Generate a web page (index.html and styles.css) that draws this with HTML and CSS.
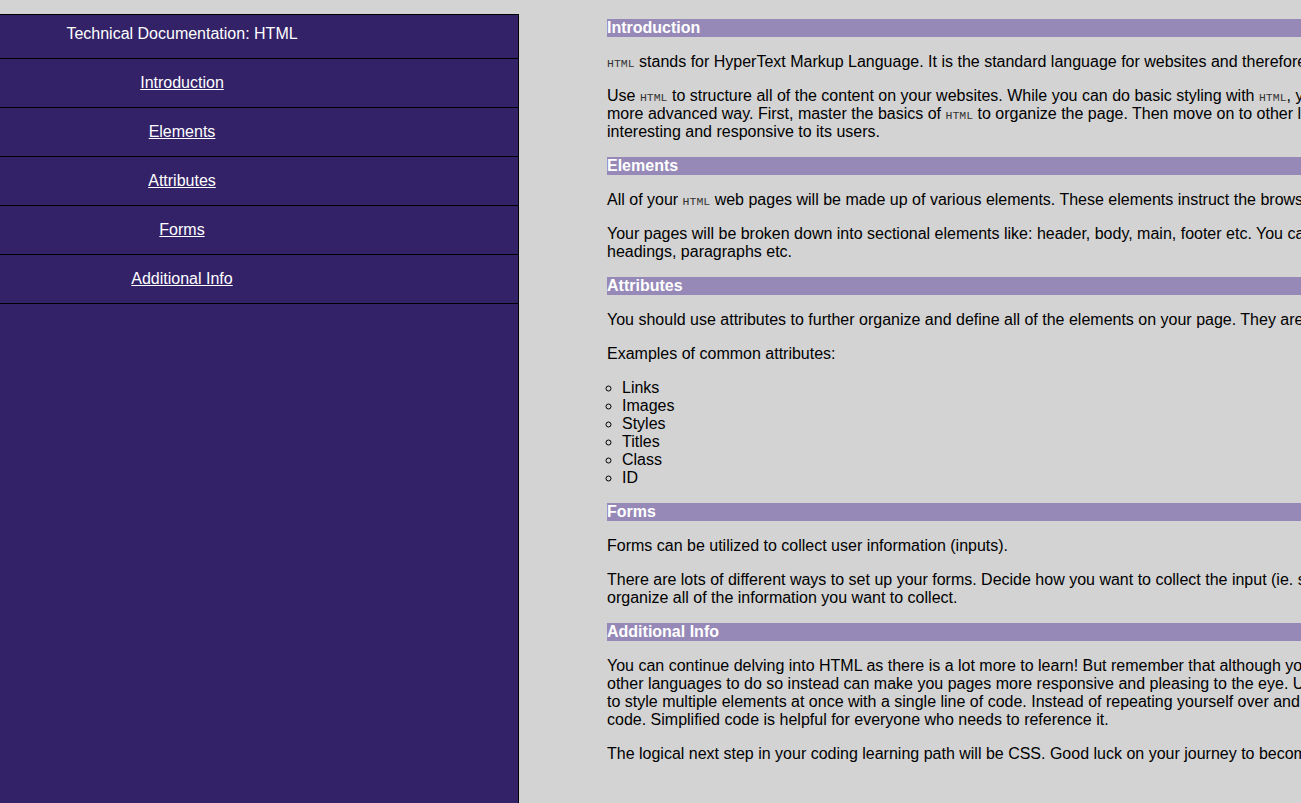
FILE: index.html
```html
<!DOCTYPE html>
<html lang="en">
<head>
<meta charset="utf-8">
<title>Technical Documentation: HTML</title>
<link rel="stylesheet" href="styles.css">
</head>
<body>
<nav class="sidebar" id="navbar">
  <header class="nav-title">Technical Documentation: HTML</header>
  <ul class="nav-list">
    <li class="nav-item"><a class="nav-link" href="#Introduction">Introduction</a></li>
    <li class="nav-item"><a class="nav-link" href="#Elements">Elements</a></li>
    <li class="nav-item"><a class="nav-link" href="#Attributes">Attributes</a></li>
    <li class="nav-item"><a class="nav-link" href="#Forms">Forms</a></li>
    <li class="nav-item"><a class="nav-link" href="#Additional_Info">Additional Info</a></li>
  </ul>
</nav>
<main class="content" id="main-doc">
  <section class="doc-section" id="Introduction">
    <header class="section-title">Introduction</header>
    <p><code class="tag">HTML</code> stands for HyperText Markup Language. It is the standard language for websites and therefore the first one you should learn.</p>
    <p>Use <code class="tag">HTML</code> to structure all of the content on your websites. While you can do basic styling with <code class="tag">HTML</code>, you will need other languages to style it in a more advanced way. First, master the basics of <code class="tag">HTML</code> to organize the page. Then move on to other languages like CSS and JS to make it more interesting and responsive to its users.</p>
  </section>
  <section class="doc-section" id="Elements">
    <header class="section-title">Elements</header>
    <p>All of your <code class="tag">HTML</code> web pages will be made up of various elements. These elements instruct the browser how to display content.</p>
    <p>Your pages will be broken down into sectional elements like: header, body, main, footer etc. You can break these down even further into the headings, paragraphs etc.</p>
  </section>
  <section class="doc-section" id="Attributes">
    <header class="section-title">Attributes</header>
    <p>You should use attributes to further organize and define all of the elements on your page. They are helpful for styling and scripting.</p>
    <p>Examples of common attributes:</p>
    <ul class="attr-list">
      <li>Links</li>
      <li>Images</li>
      <li>Styles</li>
      <li>Titles</li>
      <li>Class</li>
      <li>ID</li>
    </ul>
  </section>
  <section class="doc-section" id="Forms">
    <header class="section-title">Forms</header>
    <p>Forms can be utilized to collect user information (inputs).</p>
    <p>There are lots of different ways to set up your forms. Decide how you want to collect the input (ie. select, text, checkbox) and how you want to organize all of the information you want to collect.</p>
  </section>
  <section class="doc-section" id="Additional_Info">
    <header class="section-title">Additional Info</header>
    <p>You can continue delving into HTML as there is a lot more to learn! But remember that although you could style pages with HTML alone, using other languages to do so instead can make you pages more responsive and pleasing to the eye. Using CSS, for example, gives you the ability to style multiple elements at once with a single line of code. Instead of repeating yourself over and over again, you will be able to write cleaner code. Simplified code is helpful for everyone who needs to reference it.</p>
    <p>The logical next step in your coding learning path will be CSS. Good luck on your journey to becoming a web developer!</p>
  </section>
</main>
</body>
</html>
```

FILE: styles.css
```css
html {
  overflow: hidden;
}

body {
  margin: 0;
  background: #d3d3d3;
  color: #000;
  font-family: "Liberation Sans", Arial, sans-serif;
  font-size: 16px;
  line-height: 18px;
  display: flex;
  align-items: flex-start;
}

.sidebar {
  flex: none;
  width: 519px;
  height: calc(100vh - 14px);
  margin-top: 14px;
  box-sizing: border-box;
  border-top: 1px solid #000;
  border-right: 1px solid #000;
  background: #332268;
  color: #fff;
}

.nav-title {
  padding: 10px 154px 15px 0;
  text-align: center;
  border-bottom: 1px solid #000;
}

.nav-list {
  list-style: none;
  margin: 0;
  padding: 0;
}

.nav-item {
  padding: 15px 154px 15px 0;
  text-align: center;
  border-bottom: 1px solid #000;
}

.nav-link {
  color: #fff;
  text-decoration: underline;
}

.content {
  flex: none;
  width: 1018px;
  margin-left: 88px;
  padding-top: 19px;
}

.section-title {
  background: #9689b7;
  color: #fff;
  font-weight: bold;
}

.doc-section p {
  margin: 16px 0;
}

.tag {
  font-family: "Liberation Mono", "DejaVu Sans Mono", monospace;
  font-size: 11.5px;
  line-height: 1;
  color: #333;
}

.attr-list {
  margin: 16px 0;
  padding-left: 15px;
  list-style-type: circle;
}
```
